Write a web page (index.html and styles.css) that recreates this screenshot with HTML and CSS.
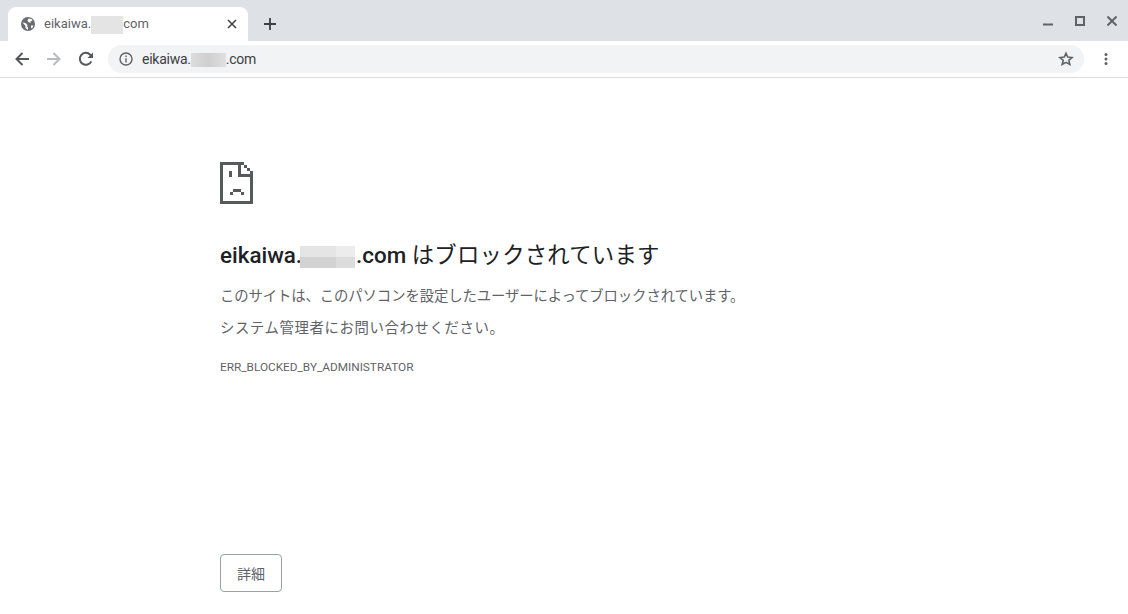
FILE: index.html
```html
<!DOCTYPE html>
<html lang="ja">
<head>
<meta charset="utf-8">
<title>eikaiwa</title>
<link rel="stylesheet" href="styles.css">
</head>
<body>
<header class="browser">
  <div class="tabstrip">
    <div class="tab">
      <svg class="favicon" viewBox="0 0 16 16" width="16" height="16"><circle cx="8" cy="8" r="7" fill="#696c70"/><path d="M2.500 6.500l3 .5 2 2-.5 1.500 1 1v2.500L5.500 12V10zM8.500 2.500l3 .5 1 1.500-2 1V7L8.500 6 7.500 4.500zM11 9.500h2.500L12 12.500l-1-1z" fill="#fff"/></svg>
      <span class="tab-title">eikaiwa.<span class="mask mask-tab"></span>com</span>
      <svg class="tab-close" viewBox="0 0 10 10" width="10" height="10"><path d="M1 1l8 8M9 1l-8 8" stroke="#3c4043" stroke-width="1.500" fill="none"/></svg>
    </div>
    <svg class="new-tab" viewBox="0 0 12 12" width="12" height="12"><path d="M6 0v12M0 6h12" stroke="#3c4043" stroke-width="1.800" fill="none"/></svg>
    <div class="window-controls">
      <svg viewBox="0 0 10 10" width="10" height="10"><path d="M0 8.500h10" stroke="#5f6368" stroke-width="2" fill="none"/></svg>
      <svg viewBox="0 0 10 10" width="10" height="10"><rect x="1" y="1" width="8" height="8" stroke="#5f6368" stroke-width="2" fill="none"/></svg>
      <svg viewBox="0 0 10 10" width="10" height="10"><path d="M.5.500l9 9M9.500.500l-9 9" stroke="#5f6368" stroke-width="2" fill="none"/></svg>
    </div>
  </div>
  <div class="toolbar">
    <svg class="nav" viewBox="0 0 16 16" width="16" height="16"><path d="M15 8H2.500M8.500 2L2.500 8l6 6" stroke="#54575b" stroke-width="2" fill="none"/></svg>
    <svg class="nav" viewBox="0 0 16 16" width="16" height="16"><path d="M1 8h12.500M7.500 2l6 6-6 6" stroke="#b9bbbe" stroke-width="2" fill="none"/></svg>
    <svg class="nav" viewBox="0 0 16 16" width="16" height="16"><path d="M13.300 10.300A6 6 0 1 1 12.200 3.700L14.500 6" stroke="#54575b" stroke-width="2" fill="none"/><path d="M15 1.500V7H9.500z" fill="#54575b"/></svg>
    <div class="omnibox">
      <svg class="info" viewBox="0 0 14 14" width="14" height="14"><circle cx="7" cy="7" r="6" stroke="#5f6368" stroke-width="1.400" fill="none"/><path d="M7 6.200V10.500M7 3.400V5" stroke="#5f6368" stroke-width="1.400" fill="none"/></svg>
      <span class="url">eikaiwa.<span class="mask mask-url"></span>.com</span>
      <svg class="star" viewBox="0 0 16 16" width="16" height="16"><path d="M8 2.200l1.700 3.900 4.300.4-3.200 2.800 1 4.200L8 11.300l-3.800 2.200 1-4.200L2 6.500l4.300-.4z" stroke="#5f6368" stroke-width="1.600" fill="none"/></svg>
    </div>
    <svg class="menu" viewBox="0 0 4 14" width="4" height="14"><circle cx="2" cy="2.500" r="1.500" fill="#5f6368"/><circle cx="2" cy="7" r="1.500" fill="#5f6368"/><circle cx="2" cy="11.500" r="1.500" fill="#5f6368"/></svg>
  </div>
</header>
<main class="page">
  <svg class="sad" viewBox="0 0 33 42" width="33" height="42" shape-rendering="crispEdges"><path fill="#58595b" fill-rule="evenodd" d="M0 0H24V3H27V6H30V9H33V42H0ZM3 3V39H30V15H18V3ZM21 3V12H30V9H27V6H24V3ZM9 9H12V15H9ZM13 27H21V30H24V33H21V30H13V33H10V30H13Z"/></svg>
  <h1 class="title"><span class="latin">eikaiwa.<span class="mask mask-title"></span>.com</span> <span class="title-ja">はブロックされています</span></h1>
  <p class="line first">このサイトは、このパソコンを設定したユーザーによってブロックされています。</p>
  <p class="line second">システム管理者にお問い合わせください。</p>
  <p class="code">ERR_BLOCKED_BY_ADMINISTRATOR</p>
  <button class="details">詳細</button>
</main>
</body>
</html>
```
FILE: styles.css
```css
* { box-sizing: border-box; }
html, body { margin: 0; height: 100%; }
body {
  background: #fff;
  overflow: hidden;
  font-family: Roboto, "Noto Sans CJK JP", sans-serif;
}
.browser { height: 78px; }
.tabstrip {
  height: 41px;
  background: #dee1e6;
  display: flex;
  align-items: flex-end;
  padding-left: 8px;
}
.tab {
  width: 240px;
  height: 34px;
  background: #fff;
  border-radius: 8px 8px 0 0;
  display: flex;
  align-items: center;
  padding: 0 11px 0 12px;
  color: #5f6368;
  font-size: 13px;
}
.favicon { flex: none; }
.tab-title { flex: 1; margin: 2px 0 0 8px; white-space: nowrap; }
.tab-close { flex: none; }
.new-tab { margin: 0 0 11px 16px; flex: none; }
.window-controls {
  margin-left: auto;
  align-self: flex-start;
  display: flex;
  gap: 22px;
  padding: 16px 11px 0 0;
}
.toolbar {
  height: 37px;
  border-bottom: 1px solid #dadce0;
  display: flex;
  align-items: center;
  padding: 0 0 1px 14px;
}
.nav { flex: none; margin-right: 16px; }
.omnibox {
  flex: none;
  width: 976px;
  height: 28px;
  margin-left: -2px;
  border-radius: 14px;
  background: #f1f3f4;
  display: flex;
  align-items: center;
  padding: 0 10px 0 11px;
  color: #3c4043;
  font-size: 14px;
}
.info { flex: none; }
.url { flex: 1; margin: 1px 0 0 9px; white-space: nowrap; letter-spacing: -.25px; }
.star { flex: none; }
.menu { flex: none; margin-left: 20px; }
.mask { display: inline-block; vertical-align: middle; }
.mask-tab { width: 32px; height: 18px; background: #e4e4e4; }
.mask-url {
  width: 35px; height: 14px;
  background: linear-gradient(90deg, #dcdcdc, #cfcfcf 50%, #e0e0e0);
}
.mask-title {
  width: 55px; height: 22px;
  margin: 0 1px 0 -2px;
  vertical-align: -5px;
  background:
    linear-gradient(90deg, transparent 65%, #ececec 65%) 0 0 / 100% 50% no-repeat,
    linear-gradient(90deg, transparent 65%, #dcdcdc 65%) 0 100% / 100% 50% no-repeat,
    linear-gradient(#e5e5e5 50%, #d2d2d2 50%);
}
.page { padding: 84px 0 0 220px; }
.sad { display: block; }
.title {
  margin: 36px 0 0;
  font-size: 22.4px;
  line-height: 30px;
  font-weight: 400;
  color: #202124;
  white-space: nowrap;
}
.latin { font-weight: 500; }
.title-ja { letter-spacing: .2px; }
.line {
  margin: 0;
  font-size: 14.4px;
  line-height: 32px;
  color: #5f6368;
  white-space: nowrap;
}
.first { margin-top: 11px; letter-spacing: -.13px; }
.second { letter-spacing: .6px; }
.code {
  margin: 14px 0 0;
  font-size: 11.8px;
  line-height: 16px;
  color: #5f6368;
}
.details {
  display: block;
  width: 62px;
  height: 38px;
  margin-top: 179px;
  padding: 0;
  border: 1px solid #9aa0a6;
  border-radius: 4px;
  background: #fff;
  color: #5f6368;
  font: 14px Roboto, "Noto Sans CJK JP", sans-serif;
}
```
